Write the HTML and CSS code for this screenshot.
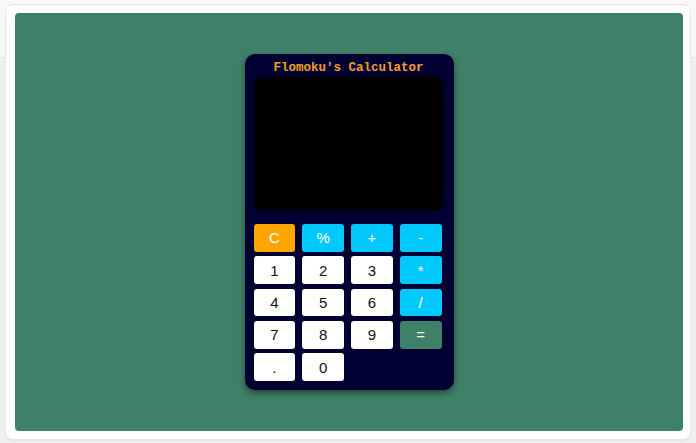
FILE: index.html
```html
<!DOCTYPE html>
<html lang="en">
<head>
<meta charset="utf-8">
<title>Flomoku's Calculator</title>
<link rel="stylesheet" href="styles.css">
</head>
<body>
<div class="card">
  <main class="stage">
    <div class="calculator">
      <h1 class="title">Flomoku's Calculator</h1>
      <div class="display"></div>
      <div class="keys">
        <button class="key clear">C</button>
        <button class="key op">%</button>
        <button class="key op">+</button>
        <button class="key op">-</button>
        <button class="key">1</button>
        <button class="key">2</button>
        <button class="key">3</button>
        <button class="key op">*</button>
        <button class="key">4</button>
        <button class="key">5</button>
        <button class="key">6</button>
        <button class="key op">/</button>
        <button class="key">7</button>
        <button class="key">8</button>
        <button class="key">9</button>
        <button class="key equals">=</button>
        <button class="key">.</button>
        <button class="key">0</button>
      </div>
    </div>
  </main>
</div>
</body>
</html>
```
FILE: styles.css
```css
* { box-sizing: border-box; }
html, body { height: 100%; }
body {
  margin: 0;
  padding: 4px 5px 3px 5px;
  background: linear-gradient(#f8f8f8 0 57px, #e4e4e4 57px 58px, #efefef 58px);
  font-family: "Liberation Sans", Arial, sans-serif;
}
.card {
  height: 436px;
  background: #ffffff;
  border: 1px solid #e6e6e6;
  border-radius: 8px;
  padding: 8px 7px 8px 9px;
  box-shadow: 0 1px 2px rgba(0,0,0,0.05);
}
.stage {
  height: 100%;
  background: #3f8068;
  border-radius: 4px;
  display: flex;
  align-items: center;
  justify-content: center;
}
.calculator {
  width: 209px;
  background: #000033;
  border-radius: 10px;
  padding: 7px 10px 9px 9px;
  box-shadow: 0 3px 6px rgba(0,0,0,0.45);
}
.title {
  margin: 0;
  text-align: center;
  font-family: "Liberation Mono", "Courier New", monospace;
  font-weight: bold;
  font-size: 12.5px;
  line-height: 15px;
  color: #f5a020;
}
.display {
  height: 135px;
  background: #000000;
  border-radius: 10px;
  margin-bottom: 13px;
}
.keys {
  display: grid;
  grid-template-columns: repeat(4, 1fr);
  grid-auto-rows: 27.7px;
  column-gap: 7px;
  row-gap: 4.6px;
  margin-right: 2px;
}
.key {
  border: none;
  border-radius: 3px;
  background: #ffffff;
  color: #111111;
  font-family: "Liberation Sans", Arial, sans-serif;
  font-size: 15px;
  padding: 0;
  margin: 0;
}
.key.op { background: #00c8fa; color: #ffffff; }
.key.clear { background: #ffa500; color: #ffffff; }
.key.equals { background: #3f8068; color: #ffffff; }
```
